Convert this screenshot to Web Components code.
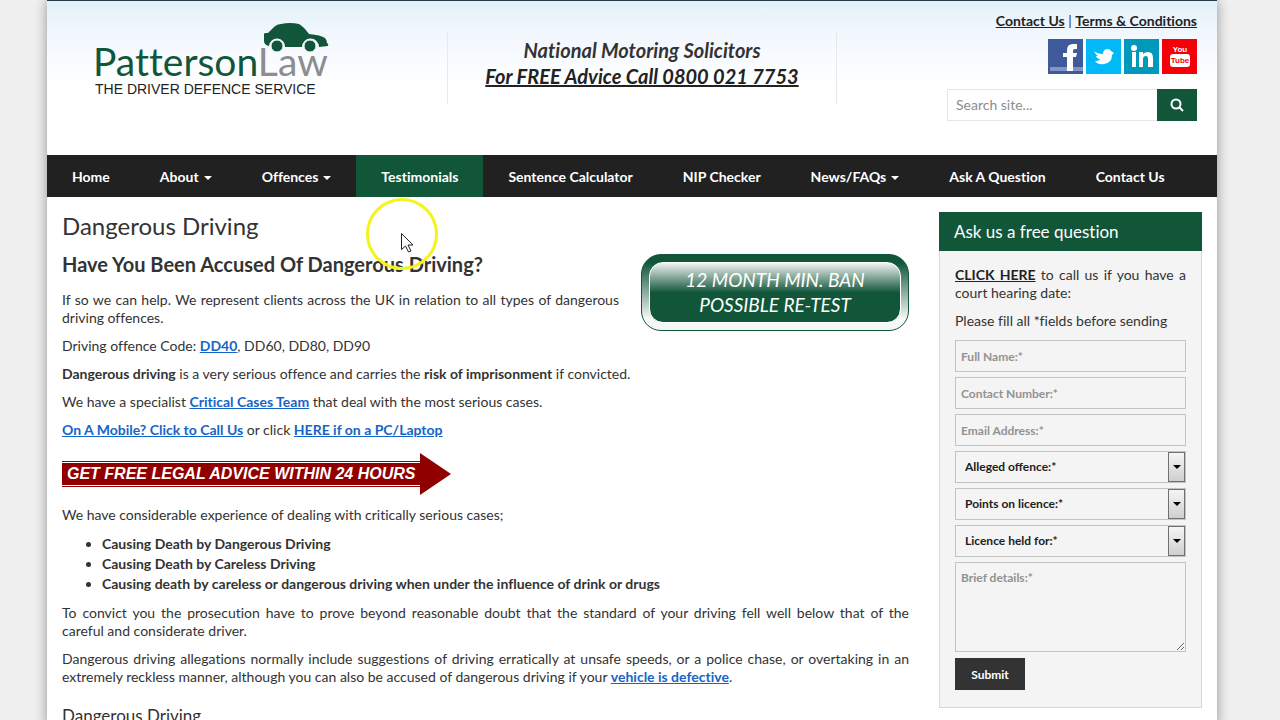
<!DOCTYPE html>
<html lang="en">
<head>
<meta charset="utf-8">
<meta name="viewport" content="width=device-width, initial-scale=1">
<title>Dangerous Driving | Patterson Law</title>
<style>
    html{
        background:#f0f0f0;
        scrollbar-width:none;
    }
    body{
        margin:0;
        padding-right:16px;
        font-family:Lato, "Liberation Sans", sans-serif;
        font-size:14px;
        line-height:18px;
        font-variant-ligatures:none;
        color:#333;
    }
    h1, h2, h3, p, ul{
        margin:0;
    }
    h1{
        font-size:24px;
        line-height:28px;
        font-weight:400;
        margin-bottom:12px;
    }
    h2{
        font-size:20px;
        line-height:24px;
        margin-bottom:15px;
    }
    h3{
        font-size:17px;
        line-height:20px;
        font-weight:400;
        padding-top:10px;
    }
    p{
        margin-bottom:10px;
        text-align:justify;
    }
    p a{
        color:#1565c8;
        font-weight:700;
    }
    .dark{
        color:#222;
    }
    ul{
        line-height:20px;
        font-weight:700;
        margin-bottom:10px;
        padding-left:40px;
    }
</style>
</head>
<body>
<law-page>
    <law-header slot="header"></law-header>
    <law-nav slot="nav">
        <law-nav-item>Home</law-nav-item>
        <law-nav-item menu>About</law-nav-item>
        <law-nav-item menu>Offences</law-nav-item>
        <law-nav-item active>Testimonials</law-nav-item>
        <law-nav-item>Sentence Calculator</law-nav-item>
        <law-nav-item>NIP Checker</law-nav-item>
        <law-nav-item menu>News/FAQs</law-nav-item>
        <law-nav-item>Ask A Question</law-nav-item>
        <law-nav-item>Contact Us</law-nav-item>
    </law-nav>

    <h1>Dangerous Driving</h1>
    <law-badge><span>12 MONTH MIN. BAN</span><span>POSSIBLE RE-TEST</span></law-badge>
    <h2>Have You Been Accused Of Dangerous Driving?</h2>
    <p>If so we can help. We represent clients across the UK in relation to all types of dangerous driving offences.</p>
    <p>Driving offence Code: <a href="#dd40">DD40</a>, DD60, DD80, DD90</p>
    <p><b>Dangerous driving</b> is a very serious offence and carries the <b>risk of imprisonment</b> if convicted.</p>
    <p>We have a specialist <a href="#team">Critical Cases Team</a> that deal with the most serious cases.</p>
    <p><a href="#call">On A Mobile? Click to Call Us</a> or click <a href="#pc">HERE if on a PC/Laptop</a></p>
    <law-arrow>GET FREE LEGAL ADVICE WITHIN 24 HOURS</law-arrow>
    <p>We have considerable experience of dealing with critically serious cases;</p>
    <ul>
        <li>Causing Death by Dangerous Driving</li>
        <li>Causing Death by Careless Driving</li>
        <li>Causing death by careless or dangerous driving when under the influence of drink or drugs</li>
    </ul>
    <p>To convict you the prosecution have to prove beyond reasonable doubt that the standard of your driving fell well below that of the careful&nbsp;and considerate driver.</p>
    <p>Dangerous driving allegations normally include suggestions of driving erratically at unsafe speeds, or a police chase, or overtaking in an extremely reckless manner, although you can also be accused of dangerous driving if your <a href="#vehicle">vehicle is defective</a>.</p>
    <h3>Dangerous Driving</h3>

    <law-panel slot="side">
        <span slot="title">Ask us a free question</span>
        <p><a class="dark" href="#click">CLICK HERE</a> to call us if you have a court hearing date:</p>
        <p>Please fill all *fields before sending</p>
        <law-form></law-form>
    </law-panel>
</law-page>
<law-pointer></law-pointer>

<script>
class LawPage extends HTMLElement{
    constructor(){
        super();
        this.attachShadow({ mode: "open" });
        this.shadowRoot.innerHTML = `
        <style>
        :host{
            display:block;
            max-width:1170px;
            margin:0 auto;
            background:white;
            box-shadow:0 0 12px rgba(0, 0, 0, .4);
        }
        .columns{
            display:grid;
            grid-template-columns:minmax(0, 1fr) 263px;
            gap:30px;
            padding:15px 15px 0;
        }
        </style>
        <slot name="header"></slot>
        <slot name="nav"></slot>
        <div class="columns">
            <main><slot></slot></main>
            <aside><slot name="side"></slot></aside>
        </div>
        `
    }
}

class LawHeader extends HTMLElement{
    constructor(){
        super();
        this.attachShadow({ mode: "open" });
        this.shadowRoot.innerHTML = `
        <style>
        :host{
            display:block;
        }
        header{
            box-sizing:border-box;
            min-height:155px;
            display:grid;
            grid-template-columns:400fr 390fr 380fr;
            align-items:start;
            border-top:1px solid #243c46;
            background:linear-gradient(#e3f0f9, #f3f8fe 36px, #fff 86px);
        }
        .logo{
            margin:18px 0 0 45px;
        }
        .logo svg{
            display:block;
        }
        .call{
            box-sizing:border-box;
            min-height:72px;
            margin-top:31px;
            padding-top:5px;
            border:solid #e6e9ed;
            border-width:0 1px;
            text-align:center;
            font-size:20px;
            line-height:26px;
            font-weight:700;
            font-style:italic;
        }
        .call a{
            color:#222;
        }
        .tools{
            display:flex;
            flex-direction:column;
            align-items:flex-end;
            padding:11px 20px 0 0;
        }
        .links a{
            color:#222;
            font-weight:700;
        }
        .social{
            display:flex;
            gap:3px;
            margin:9px 0 15px;
        }
        .social a, .social svg{
            display:block;
        }
        form{
            display:flex;
            width:250px;
            height:32px;
        }
        input{
            flex:1;
            min-width:0;
            box-sizing:border-box;
            border:1px solid #e6e6e6;
            border-right:0;
            padding:0 8px;
            font:inherit;
            background:white;
        }
        input::placeholder{
            color:#8c8c8c;
        }
        button{
            width:40px;
            padding:0;
            border:0;
            background:#12563a;
            display:grid;
            place-items:center;
        }
        </style>
        <header>
            <a class="logo" href="#home" aria-label="Patterson Law">
                <svg width="240" height="82" viewBox="0 0 240 82">
                    <text x="1" y="57" font-family="Lato" font-size="39" fill="#12563a">Patterson<tspan fill="#8b8d90">Law</tspan></text>
                    <text x="3" y="75" font-family="Liberation Sans" font-size="14" fill="#222">THE DRIVER DEFENCE SERVICE</text>
                    <path fill="#12563a" d="M172 15q0-1 2-1h2q3-3 6-6 3-3 7-3 9-2 18 0 4 2 10 10 12 1 16 4 2 2 2 5 2 1 1 3l-9 1a8 8 0 0 0-17 0h-17a8 8 0 0 0-16-1q-5-1-5-5z"/>
                    <circle cx="185" cy="27" r="6" fill="#12563a" stroke="#eef6fb"/>
                    <circle cx="218" cy="27" r="6" fill="#12563a" stroke="#eef6fb"/>
                </svg>
            </a>
            <div class="call">
                <div>National Motoring Solicitors</div>
                <a href="#call">For FREE Advice Call 0800 021 7753</a>
            </div>
            <div class="tools">
                <div class="links"><a href="#contact">Contact Us</a> | <a href="#terms">Terms &amp; Conditions</a></div>
                <div class="social">
                    <a href="#facebook" aria-label="Facebook"><svg width="35" height="35"><path fill="#3f5a9a" d="M0 0h35v35H0z"/><path fill="#8495c4" d="M2 28h33v4H2z"/><path fill="#fff" d="M19 32V18h-4v-4h4v-3q0-6 6-6h4v5h-2q-2 0-2 2v2h4l-1 4h-3v14z"/></svg></a>
                    <a href="#twitter" aria-label="Twitter"><svg width="35" height="35"><path fill="#00b9f6" d="M0 0h35v35H0z"/><path fill="#fff" d="M8 12q3 3 9 3 0-5 5-5 2 0 3 2l3 2-2 2q0 8-8 9-6 1-9-3 4 0 5-2-3 0-4-3h2q-3-2-4-5z"/></svg></a>
                    <a href="#linkedin" aria-label="LinkedIn"><svg width="35" height="35"><path fill="#0098bb" d="M0 0h35v35H0z"/><circle cx="10" cy="9" r="3" fill="#fff"/><path fill="#fff" d="M8 13h4v15H8zM15 13h4v2q2-2 5-2 5 0 5 6v9h-5v-8q0-3-2-3-3 0-3 3v8h-4z"/></svg></a>
                    <a href="#youtube" aria-label="YouTube"><svg width="35" height="35"><path fill="#f30009" d="M0 0h35v35H0z"/><rect x="8" y="15" width="20" height="13" rx="3" fill="#fff"/><text x="18" y="13" text-anchor="middle" font-family="Liberation Sans Narrow, Liberation Sans" font-size="8" font-weight="700" fill="#fff">You</text><text x="18" y="24" text-anchor="middle" font-family="Liberation Sans Narrow, Liberation Sans" font-size="8" font-weight="700" fill="#f30009">Tube</text></svg></a>
                </div>
                <form>
                    <input type="search" placeholder="Search site..." aria-label="Search site...">
                    <button type="button" aria-label="Search"><svg width="14" height="14" fill="none" stroke="#fff" stroke-width="2"><circle cx="6" cy="6" r="4.500"/><path d="M9 9l4 4"/></svg></button>
                </form>
            </div>
        </header>
        `
    }
}

class LawNav extends HTMLElement{
    constructor(){
        super();
        this.attachShadow({ mode: "open" });
        this.shadowRoot.innerHTML = `
        <style>
        :host{
            display:block;
            background:#212121;
        }
        nav{
            display:flex;
        }
        </style>
        <nav><slot></slot></nav>
        `
    }
}

class LawNavItem extends HTMLElement{
    constructor(){
        super();
        this.attachShadow({ mode: "open" });
        this.shadowRoot.innerHTML = `
        <style>
        :host{
            display:block;
        }
        a{
            display:flex;
            align-items:center;
            gap:5px;
            padding:2px 25px 0;
            line-height:40px;
            color:white;
            font-weight:700;
            text-decoration:none;
            white-space:nowrap;
        }
        :host([active]) a{
            background:#12563a;
        }
        i{
            display:none;
            border:4px solid transparent;
            border-top-color:white;
            border-bottom:0;
            margin-top:2px;
        }
        :host([menu]) i{
            display:block;
        }
        </style>
        <a href="#nav"><slot></slot><i></i></a>
        `
    }
}

class LawBadge extends HTMLElement{
    constructor(){
        super();
        this.attachShadow({ mode: "open" });
        this.shadowRoot.innerHTML = `
        <style>
        :host{
            float:right;
            box-sizing:border-box;
            width:268px;
            margin:2px 0 0 22px;
            padding:7px;
            border:1px solid #12563a;
            border-radius:20px;
            background:linear-gradient(#12563a 10%, #f6f8f7 85%);
        }
        div{
            display:flex;
            flex-direction:column;
            padding:4px 0 5px;
            border:1px solid white;
            border-radius:14px;
            background:linear-gradient(#f0f4f2, #12563a 50%);
            color:white;
            text-align:center;
            font-size:19px;
            line-height:25px;
            font-style:italic;
        }
        </style>
        <div><slot></slot></div>
        `
    }
}

class LawArrow extends HTMLElement{
    constructor(){
        super();
        this.attachShadow({ mode: "open" });
        this.shadowRoot.innerHTML = `
        <style>
        :host{
            display:flex;
            align-items:center;
            margin:14px 0 11px;
        }
        a{
            border:solid #900000;
            border-width:1px 0;
            padding:1px 0;
            color:white;
            font:italic 700 16px/22px "Liberation Sans", Arial, sans-serif;
            text-decoration:none;
            white-space:nowrap;
        }
        span{
            display:block;
            width:358px;
            box-sizing:border-box;
            padding-left:5px;
            background:#900000;
        }
        svg{
            display:block;
        }
        </style>
        <a href="#advice"><span><slot></slot></span></a>
        <svg width="31" height="42"><path fill="#900000" d="M0 0l31 21L0 42z"/></svg>
        `
    }
}

class LawPanel extends HTMLElement{
    constructor(){
        super();
        this.attachShadow({ mode: "open" });
        this.shadowRoot.innerHTML = `
        <style>
        :host{
            display:block;
        }
        .title{
            padding:0 15px;
            background:#12563a;
            color:white;
            font-size:17px;
            line-height:39px;
        }
        .body{
            padding:15px 15px 17px;
            border:1px solid #d9d9d9;
            border-top:0;
            background:#f4f4f4;
        }
        </style>
        <div class="title"><slot name="title"></slot></div>
        <div class="body"><slot></slot></div>
        `
    }
}

class LawForm extends HTMLElement{
    constructor(){
        super();
        this.attachShadow({ mode: "open" });
        this.shadowRoot.innerHTML = `
        <style>
        :host{
            display:block;
        }
        form{
            display:grid;
            gap:5px;
        }
        input, select, textarea{
            box-sizing:border-box;
            width:100%;
            height:32px;
            margin:0;
            padding:0 5px;
            border:1px solid #c3c3c3;
            border-radius:0;
            background:#f4f4f4;
            color:#222;
            font:700 12px/16px Lato, sans-serif;
        }
        select{
            appearance:none;
            padding:0 9px;
            grid-area:1 / 1;
        }
        textarea{
            display:block;
            height:90px;
            padding-top:7px;
        }
        ::placeholder{
            color:#929292;
        }
        .select{
            display:grid;
        }
        .select i{
            grid-area:1 / 1;
            justify-self:end;
            align-self:center;
            box-sizing:border-box;
            width:17px;
            height:30px;
            margin-right:1px;
            border:1px solid #707070;
            background:linear-gradient(#f5f5f5, #cfcfcf);
            display:grid;
            place-items:center;
            pointer-events:none;
        }
        .select i::after{
            content:"";
            border:4px solid transparent;
            border-top-color:#000;
            border-bottom:0;
        }
        button{
            justify-self:start;
            width:70px;
            height:32px;
            margin-top:1px;
            padding:0;
            border:0;
            background:#333;
            color:white;
            font:700 12px Lato, sans-serif;
        }
        </style>
        <form>
            <input type="text" placeholder="Full Name:*" aria-label="Full Name:*">
            <input type="tel" placeholder="Contact Number:*" aria-label="Contact Number:*">
            <input type="email" placeholder="Email Address:*" aria-label="Email Address:*">
            <div class="select"><select aria-label="Alleged offence:*"><option>Alleged offence:*</option></select><i></i></div>
            <div class="select"><select aria-label="Points on licence:*"><option>Points on licence:*</option></select><i></i></div>
            <div class="select"><select aria-label="Licence held for:*"><option>Licence held for:*</option></select><i></i></div>
            <textarea placeholder="Brief details:*" aria-label="Brief details:*"></textarea>
            <button type="button">Submit</button>
        </form>
        `
    }
}

// highlighted mouse pointer, floats over the page
class LawPointer extends HTMLElement{
    constructor(){
        super();
        this.attachShadow({ mode: "open" });
        this.shadowRoot.innerHTML = `
        <style>
        :host{
            position:absolute;
            left:365px;
            top:197px;
            pointer-events:none;
        }
        svg{
            display:block;
        }
        </style>
        <svg width="74" height="74"><circle cx="37" cy="37" r="34.500" fill="none" stroke="#f4f41c" stroke-width="3"/><path d="M36.500 36.500v16l4-3.500 3 6 2.500-1-3-6h5z" fill="#fff" stroke="#222"/></svg>
        `
    }
}

customElements.define("law-page", LawPage)
customElements.define("law-header", LawHeader)
customElements.define("law-nav", LawNav)
customElements.define("law-nav-item", LawNavItem)
customElements.define("law-badge", LawBadge)
customElements.define("law-arrow", LawArrow)
customElements.define("law-panel", LawPanel)
customElements.define("law-form", LawForm)
customElements.define("law-pointer", LawPointer)
</script>
</body>
</html>
